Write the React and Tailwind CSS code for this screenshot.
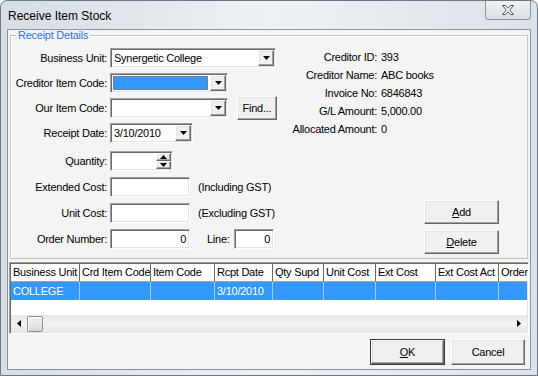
import React from 'react';

const SUNKEN = 'border border-[#a0a0a0] border-b-white border-r-white shadow-[inset_1px_1px_0_#696969,inset_-1px_-1px_0_#e3e3e3]';
const RAISED = 'border border-white border-b-[#696969] border-r-[#696969] shadow-[inset_-1px_-1px_0_#a0a0a0,inset_1px_1px_0_#e3e3e3] bg-[#f0f0f0]';

const COLUMNS = [
    { name: 'Business Unit', w: 'w-[69px]', value: 'COLLEGE' },
    { name: 'Crd Item Code', w: 'w-[71px]', value: '' },
    { name: 'Item Code', w: 'w-[64px]', value: '' },
    { name: 'Rcpt Date', w: 'w-[58px]', value: '3/10/2010' },
    { name: 'Qty Supd', w: 'w-[51px]', value: '' },
    { name: 'Unit Cost', w: 'w-[52px]', value: '' },
    { name: 'Ext Cost', w: 'w-[60px]', value: '' },
    { name: 'Ext Cost Act', w: 'w-[63px]', value: '' },
    { name: 'Order', w: 'w-[40px]', value: '' },
];

const INFO = [
    ['Creditor ID:', '393'],
    ['Creditor Name:', 'ABC books'],
    ['Invoice No:', '6846843'],
    ['G/L Amount:', '5,000.00'],
    ['Allocated Amount:', '0'],
];

function Tri({ dir = 'down', w = 7, h = 4 }) {
    const d = {
        down: `M0 0H${w}L${w / 2} ${h}Z`,
        up: `M0 ${h}H${w}L${w / 2} 0Z`,
        left: `M${w} 0V${h}L0 ${h / 2}Z`,
        right: `M0 0V${h}L${w} ${h / 2}Z`,
    }[dir];
    return (
        <svg width={w} height={h} viewBox={`0 0 ${w} ${h}`}>
            <path d={d} fill="#000" />
        </svg>
    );
}

function Combo({ w, value, focused }) {
    return (
        <div className={`h-[20px] ${w} flex bg-white ${SUNKEN} p-px`}>
            <div className="flex-1 flex items-center pl-px pr-[2px] py-px overflow-hidden">
                {focused ? (
                    <div className="w-full h-full bg-[#3399ff] border border-dotted border-[#b8662a]" />
                ) : (
                    <span className="whitespace-nowrap pl-px">{value}</span>
                )}
            </div>
            <div className={`w-[16px] h-full flex items-center justify-center ${RAISED}`}>
                <Tri />
            </div>
        </div>
    );
}

function TextBox({ w, value, right }) {
    return (
        <div className={`h-[20px] ${w} flex items-center bg-white ${SUNKEN} px-[3px] ${right ? 'justify-end' : ''}`}>
            {value}
        </div>
    );
}

function Button({ w, h = 'h-[24px]', children, isDefault }) {
    const btn = (
        <div className={`${isDefault ? 'w-full h-full' : `${w} ${h}`} flex items-center justify-center ${RAISED}`}>
            {children}
        </div>
    );
    if (!isDefault) return btn;
    return <div className={`${w} ${h} border border-[#3a3a3a]`}>{btn}</div>;
}

function Row({ label, mt = '', children }) {
    return (
        <div className={`flex items-center h-[20px] ${mt}`}>
            <div className="w-[99px] pr-[3px] text-right whitespace-nowrap">{label}</div>
            {children}
        </div>
    );
}

export default function App() {
    return (
        <div className="w-[538px] h-[376px] bg-white font-['Liberation_Sans',Arial,sans-serif] text-[11px] tracking-[-0.25px] text-black">
            <div className="w-full h-full flex flex-col rounded-t-[7px] border border-[#6f7884] bg-gradient-to-r from-[#d6dde5] via-[#eef1f4] to-[#dde3ea]">
                {/* Title bar */}
                <div className="h-[28px] flex items-start justify-between pl-[7px] pr-[6px]">
                    <span className="self-center text-[12px] tracking-normal pt-px">Receive Item Stock</span>
                    <div className="w-[46px] h-[19px] flex items-center justify-center rounded-b-[4px] border border-t-0 border-[#8c939c] bg-gradient-to-b from-[#eef1f4] to-[#dadfe5]">
                        <svg width="14" height="12" viewBox="0 0 14 12">
                            <path d="M1.5 1.5H4.5L7 4.3L9.5 1.5H12.5L8.7 6L12.5 10.5H9.5L7 7.7L4.5 10.5H1.5L5.3 6Z" fill="#fff" stroke="#4d535a" strokeWidth="1" strokeLinejoin="round" />
                        </svg>
                    </div>
                </div>

                {/* Client area */}
                <div className="flex-1 mx-[6px] mb-[5px] border border-[#8a939e] bg-[#f4f4f4] flex flex-col">
                    <fieldset className="mx-[2px] border border-[#c5c5c5] shadow-[inset_1px_1px_0_#fff] flex">
                        <legend className="ml-[5px] px-[2px] leading-[11px] text-[#2f74d8]">Receipt Details</legend>

                        {/* Left form */}
                        <div className="w-[266px] pt-[7px] pb-[9px] flex flex-col">
                            <Row label="Business Unit:">
                                <Combo w="w-[166px]" value="Synergetic College" />
                            </Row>
                            <Row label="Creditor Item Code:" mt="mt-[5px]">
                                <Combo w="w-[118px]" focused />
                            </Row>
                            <Row label="Our Item Code:" mt="mt-[5px]">
                                <Combo w="w-[118px]" value="" />
                                <div className="ml-[9px]">
                                    <Button w="w-[40px]">Find...</Button>
                                </div>
                            </Row>
                            <Row label="Receipt Date:" mt="mt-[5px]">
                                <Combo w="w-[83px]" value="3/10/2010" />
                            </Row>
                            <Row label="Quantity:" mt="mt-[8px]">
                                <div className={`h-[20px] w-[63px] flex bg-white ${SUNKEN} p-px`}>
                                    <div className="flex-1" />
                                    <div className="w-[15px] flex flex-col">
                                        <div className={`flex-1 flex items-center justify-center ${RAISED}`}>
                                            <Tri dir="up" />
                                        </div>
                                        <div className={`flex-1 flex items-center justify-center ${RAISED}`}>
                                            <Tri />
                                        </div>
                                    </div>
                                </div>
                            </Row>
                            <Row label="Extended Cost:" mt="mt-[6px]">
                                <TextBox w="w-[80px]" />
                                <span className="ml-[8px] whitespace-nowrap">(Including GST)</span>
                            </Row>
                            <Row label="Unit Cost:" mt="mt-[6px]">
                                <TextBox w="w-[80px]" />
                                <span className="ml-[8px] whitespace-nowrap">(Excluding GST)</span>
                            </Row>
                            <Row label="Order Number:" mt="mt-[6px]">
                                <TextBox w="w-[80px]" value="0" right />
                                <span className="ml-[17px] w-[27px]">Line:</span>
                                <TextBox w="w-[40px]" value="0" right />
                            </Row>
                        </div>

                        {/* Right info */}
                        <div className="ml-[10px] pt-[7px] flex flex-col">
                            {INFO.map(([label, value]) => (
                                <div key={label} className="flex h-[18px] items-center">
                                    <span className="w-[90px] text-right whitespace-nowrap">{label}</span>
                                    <span className="ml-[4px]">{value}</span>
                                </div>
                            ))}
                            <div className="ml-[137px] mt-[62px]">
                                <Button w="w-[75px]"><span><u>A</u>dd</span></Button>
                            </div>
                            <div className="ml-[137px] mt-[6px]">
                                <Button w="w-[75px]"><span><u>D</u>elete</span></Button>
                            </div>
                        </div>
                    </fieldset>

                    {/* List view */}
                    <div className={`mt-[3px] mx-px h-[72px] bg-white ${SUNKEN} p-px flex flex-col overflow-hidden`}>
                        <div className="flex h-[18px] shrink-0 border-b border-[#a0a0a0]">
                            {COLUMNS.map(c => (
                                <div key={c.name} className={`${c.w} shrink-0 h-full flex items-center pl-[2px] border-r border-[#696969] shadow-[inset_1px_0_0_#fff] bg-white overflow-hidden whitespace-nowrap`}>
                                    {c.name}
                                </div>
                            ))}
                        </div>
                        <div className="flex h-[18px] shrink-0 bg-[#3399ff] text-white">
                            {COLUMNS.map(c => (
                                <div key={c.name} className={`${c.w} shrink-0 h-full flex items-center pl-[2px] border-r border-[#a9c7ea] overflow-hidden whitespace-nowrap`}>
                                    {c.value}
                                </div>
                            ))}
                            <div className="flex-1" />
                        </div>
                        <div className="flex-1" />
                        {/* Horizontal scrollbar */}
                        <div className="h-[17px] shrink-0 flex items-center bg-gradient-to-b from-[#e6e6e6] via-[#f2f2f2] to-[#e9e9e9]">
                            <div className="w-[16px] flex justify-center">
                                <Tri dir="left" w={4} h={7} />
                            </div>
                            <div className="w-[16px] h-[16px] rounded-[2px] border border-[#8f8f8f] bg-gradient-to-b from-[#f4f4f4] to-[#d8d8d8] shadow-[inset_1px_1px_0_#fff]" />
                            <div className="flex-1" />
                            <div className="w-[16px] flex justify-center">
                                <Tri dir="right" w={4} h={7} />
                            </div>
                        </div>
                    </div>

                    {/* Dialog buttons */}
                    <div className="mt-[5px] mr-[5px] flex justify-end gap-[6px]">
                        <Button w="w-[75px]" h="h-[26px]" isDefault><span><u>O</u>K</span></Button>
                        <Button w="w-[74px]" h="h-[26px]">Cancel</Button>
                    </div>
                </div>
            </div>
        </div>
    );
}
